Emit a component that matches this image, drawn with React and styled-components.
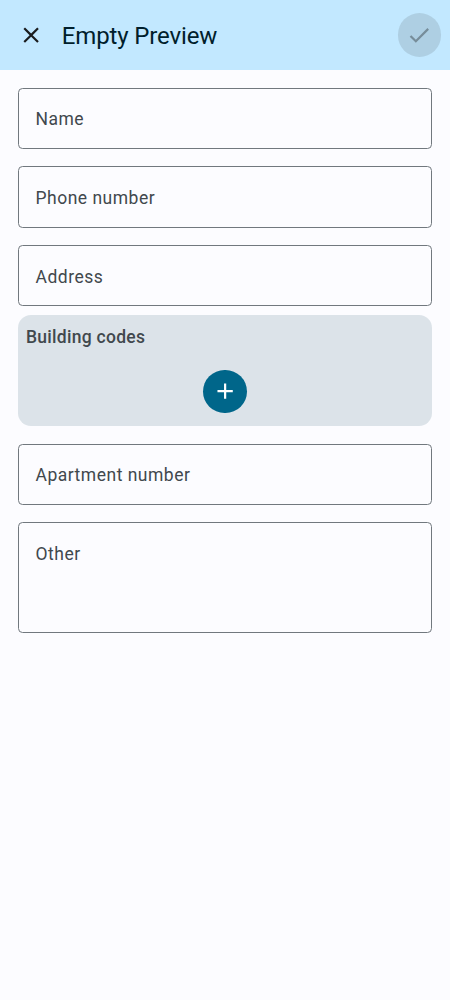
import React from 'react';
import styled, { createGlobalStyle } from 'styled-components';

const GlobalStyle = createGlobalStyle`
  *, *::before, *::after { box-sizing: border-box; }
  body { margin: 0; background: #fcfcff; font-family: Roboto, sans-serif; }
`;
const Screen = styled.main`
  min-height: 1000px;
  background: #fcfcff;
`;
const TopBar = styled.header`
  height: 70px;
  display: flex;
  align-items: center;
  padding: 0 8.75px;
  background: #c2e8ff;
`;
const IconButton = styled.button`
  display: grid;
  place-items: center;
  width: 43.75px;
  height: 43.75px;
  padding: 0;
  border: 0;
  border-radius: 50%;
  color: ${(p) => p.$color};
  background: ${(p) => p.$fill || 'transparent'};
`;
const Title = styled.h1`
  flex: 1;
  margin: 2px 0 0 9.25px;
  font-size: 24px;
  line-height: 30px;
  font-weight: 400;
  letter-spacing: -0.13px;
  color: #001e2c;
`;
const Form = styled.form`
  display: flex;
  flex-direction: column;
  padding: 17.5px 18px 0 17.5px;
`;
const Field = styled.label`
  display: block;
  height: ${(p) => p.$height || 61.25}px;
  margin-bottom: ${(p) => p.$gap ?? 17.5}px;
  padding: 17.5px 17px 0;
  border: 1px solid #71787e;
  border-radius: 4.5px;
  font-size: 17.5px;
  line-height: 26px;
  letter-spacing: 0.5px;
  color: #41484d;
`;
const Codes = styled.section`
  height: 111px;
  margin-bottom: 17.5px;
  padding: 8.5px;
  border-radius: 13px;
  background: #dce3e9;
  display: flex;
  flex-direction: column;
`;
const CodesTitle = styled.h2`
  margin: 0 0 20px;
  font-size: 17.5px;
  line-height: 26px;
  font-weight: 500;
  letter-spacing: 0.28px;
  color: #41484d;
`;
const AddRow = styled.div`
  display: flex;
  justify-content: center;
`;
const Icon = ({ d }) => (
  <svg width="26.25" height="26.25" viewBox="0 0 24 24" fill="currentColor"><path d={d} /></svg>
);

export default function App() {
  return (
    <Screen>
      <GlobalStyle />
      <TopBar>
        <IconButton $color="#1a1c1e" aria-label="Close">
          <Icon d="M19 6.41 17.59 5 12 10.59 6.41 5 5 6.41 10.59 12 5 17.59 6.41 19 12 13.41 17.59 19 19 17.59 13.41 12z" />
        </IconButton>
        <Title>Empty Preview</Title>
        <IconButton $color="#778d9a" $fill="#aecfe3" aria-label="Save" disabled>
          <Icon d="M9 16.17 4.83 12l-1.42 1.41L9 19 21 7l-1.41-1.41z" />
        </IconButton>
      </TopBar>
      <Form>
        <Field>Name</Field>
        <Field>Phone number</Field>
        <Field $gap={8.75}>Address</Field>
        <Codes>
          <CodesTitle>Building codes</CodesTitle>
          <AddRow>
            <IconButton type="button" $color="#fff" $fill="#00668a" aria-label="Add building code">
              <Icon d="M19 13h-6v6h-2v-6H5v-2h6V5h2v6h6z" />
            </IconButton>
          </AddRow>
        </Codes>
        <Field>Apartment number</Field>
        <Field $height={111}>Other</Field>
      </Form>
    </Screen>
  );
}
